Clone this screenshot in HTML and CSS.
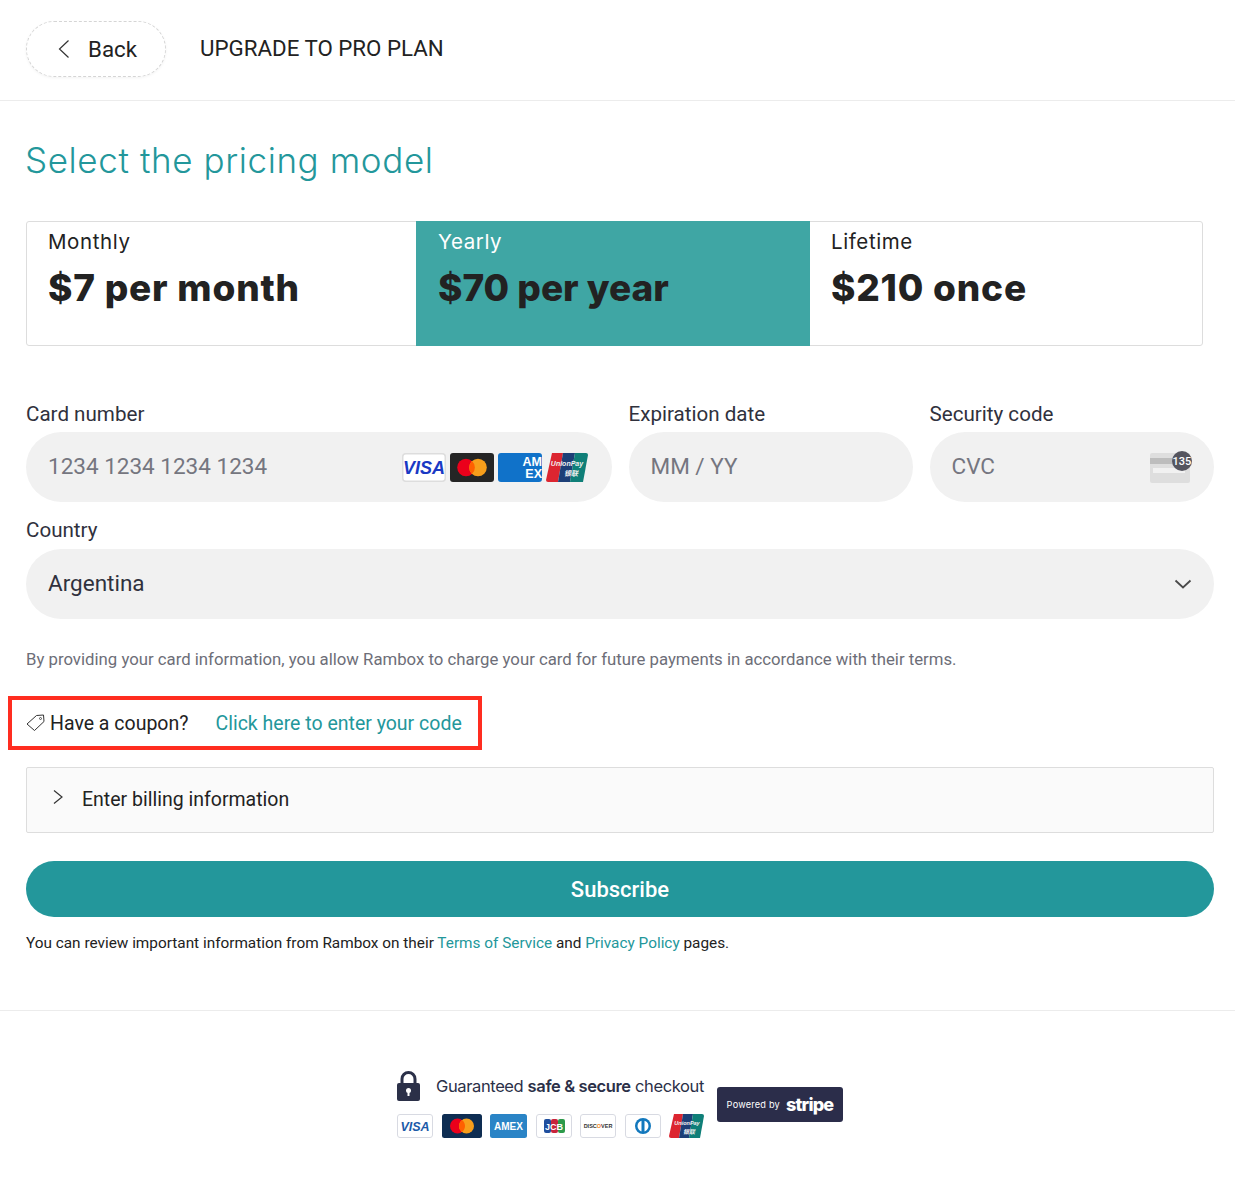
FILE: index.html
```html
<!DOCTYPE html>
<html lang="en">
<head>
  <meta charset="UTF-8">
  <meta name="viewport" content="width=device-width, initial-scale=1.0">
  <title>Upgrade to Pro Plan</title>
  <link rel="stylesheet" href="styles.css">
</head>
<body>
  <header class="topbar">
    <button class="back-button">
      <svg class="back-icon" width="14" height="20" viewBox="0 0 14 20"><path d="M11.5 1.5 2.5 10l9 8.5" fill="none" stroke="#333" stroke-width="1.2"/></svg>
      Back
    </button>
    <div class="topbar-title">UPGRADE TO PRO PLAN</div>
  </header>

  <main class="container">
    <h1>Select the pricing model</h1>

    <div class="plans">
      <div class="plan">
        <div class="plan-name">Monthly</div>
        <div class="plan-price">$7 per month</div>
      </div>
      <div class="plan active">
        <div class="plan-name">Yearly</div>
        <div class="plan-price">$70 per year</div>
      </div>
      <div class="plan">
        <div class="plan-name">Lifetime</div>
        <div class="plan-price">$210 once</div>
      </div>
    </div>

    <div class="card-grid">
      <div class="field">
        <label>Card number</label>
        <div class="input">
          <span>1234 1234 1234 1234</span>
          <div class="card-logos">
            <svg width="44" height="29" viewBox="0 0 44 29"><rect x=".75" y=".75" width="42.5" height="27.5" rx="3" fill="#fff" stroke="#ddd" stroke-width="1.5"/><text x="22" y="20.500" text-anchor="middle" class="logo-visa" font-size="18">VISA</text></svg>
            <svg width="44" height="29" viewBox="0 0 44 29"><rect width="44" height="29" rx="3" fill="#252525"/><circle cx="16" cy="14.500" r="8.800" fill="#eb001b"/><circle cx="28" cy="14.500" r="8.800" fill="#f79e1b"/><path d="M22 8a8.800 8.800 0 0 1 0 13 8.800 8.800 0 0 1 0-13z" fill="#ff5f00"/></svg>
            <svg width="44" height="29" viewBox="0 0 44 29"><rect width="44" height="29" rx="3" fill="#1072c9"/><text x="44" y="13" text-anchor="end" class="logo-amex" font-size="12.500">AM</text><text x="44" y="25" text-anchor="end" class="logo-amex" font-size="12.500">EX</text></svg>
            <svg width="42" height="29" viewBox="0 0 42 29"><path d="M6 0h11l-5 29H2q-2 0-2-2z" fill="#dc2530"/><path d="M17 0h12l-5 29H12z" fill="#1d3f77"/><path d="M29 0h11q2 0 2 2l-5 27H24z" fill="#0f7f78"/><text x="21" y="13" text-anchor="middle" class="logo-up" font-size="7">UnionPay</text><text x="25" y="23" text-anchor="middle" class="logo-up" font-size="7">银联</text></svg>
          </div>
        </div>
      </div>
      <div class="field">
        <label>Expiration date</label>
        <div class="input"><span>MM / YY</span></div>
      </div>
      <div class="field">
        <label>Security code</label>
        <div class="input cvc-input">
          <span>CVC</span>
          <svg class="cvc-icon" width="42" height="32" viewBox="0 0 42 32"><rect x="0" y="2" width="40" height="30" rx="2" fill="#dedede"/><rect x="0" y="7" width="40" height="6" fill="#bdbdbd"/><rect x="3" y="17" width="32" height="5" fill="#f1f1f1"/><circle cx="32" cy="10" r="10" fill="#55555f"/><text x="32" y="14" text-anchor="middle" class="cvc-text">135</text></svg>
        </div>
      </div>
    </div>

    <div class="field country">
      <label>Country</label>
      <div class="input">
        <span class="value">Argentina</span>
        <svg width="18" height="10" viewBox="0 0 18 10"><path d="M1.500 1.500 9 8.500l7.500-7" fill="none" stroke="#4a4a4a" stroke-width="1.800"/></svg>
      </div>
    </div>

    <p class="terms-note">By providing your card information, you allow Rambox to charge your card for future payments in accordance with their terms.</p>

    <div class="coupon">
      <svg width="19" height="18" viewBox="0 0 19 18"><path d="M1 10 10.500 1.500 17.500 1l.5 6.500L8.500 16.500z" fill="none" stroke="#333" stroke-width="1"/><circle cx="14.500" cy="4.500" r="1" fill="none" stroke="#333" stroke-width=".8"/></svg>
      <span class="coupon-text">Have a coupon?</span>
      <a class="link coupon-link">Click here to enter your code</a>
    </div>

    <div class="billing">
      <svg class="billing-icon" width="12" height="16" viewBox="0 0 12 16"><path d="M2 1.500 10 8l-8 6.500" fill="none" stroke="#333" stroke-width="1.200"/></svg>
      <span>Enter billing information</span>
    </div>

    <button class="subscribe">Subscribe</button>
    <p class="review">You can review important information from Rambox on their <a class="link">Terms of Service</a> and <a class="link">Privacy Policy</a> pages.</p>
  </main>

  <footer class="footer">
    <div class="secure">
      <div class="secure-top">
        <svg class="lock" width="23" height="30" viewBox="0 0 23 30"><path d="M5 13V8a6.500 6.500 0 0 1 13 0v5" fill="none" stroke="#2b3048" stroke-width="3"/><path d="M2 12h19q2 0 2 2v14q0 2-2 2H2q-2 0-2-2V14q0-2 2-2z" fill="#2b3048"/><circle cx="11.500" cy="19.500" r="2.500" fill="#fff"/><rect x="10.500" y="20" width="2" height="5" fill="#fff"/></svg>
        <span>Guaranteed <b>safe &amp; secure</b> checkout</span>
      </div>
      <div class="secure-cards">
        <svg width="36" height="24" viewBox="0 0 36 24"><rect x=".5" y=".5" width="35" height="23" rx="2.500" fill="#fff" stroke="#d8dae2"/><text x="18" y="16.500" text-anchor="middle" class="logo-visa2" font-size="12.500">VISA</text></svg>
        <svg width="40" height="24" viewBox="0 0 40 24"><rect width="40" height="24" rx="2.500" fill="#0e2d52"/><circle cx="15.500" cy="12" r="7.500" fill="#eb001b"/><circle cx="24.500" cy="12" r="7.500" fill="#f79e1b"/><path d="M20 6a7.500 7.500 0 0 1 0 12 7.500 7.500 0 0 1 0-12z" fill="#ff5f00"/></svg>
        <svg width="37" height="24" viewBox="0 0 37 24"><rect width="37" height="24" rx="2.500" fill="#2a84c6"/><text x="18.500" y="16" text-anchor="middle" class="logo-amex" font-size="10">AMEX</text></svg>
        <svg width="36" height="24" viewBox="0 0 36 24"><rect x=".5" y=".5" width="35" height="23" rx="2.500" fill="#fff" stroke="#d8dae2"/><rect x="8" y="5" width="7" height="14" rx="2" fill="#1f4e9e"/><rect x="15" y="5" width="7" height="14" rx="2" fill="#c8243b"/><rect x="22" y="5" width="7" height="14" rx="2" fill="#2c9a4a"/><text x="18" y="15.500" text-anchor="middle" class="logo-jcb">JCB</text></svg>
        <svg width="36" height="24" viewBox="0 0 36 24"><rect x=".5" y=".5" width="35" height="23" rx="2.500" fill="#fff" stroke="#d8dae2"/><text x="18" y="14" text-anchor="middle" class="logo-discover">DISC<tspan fill="#f58220">O</tspan>VER</text></svg>
        <svg width="36" height="24" viewBox="0 0 36 24"><rect x=".5" y=".5" width="35" height="23" rx="2.500" fill="#fff" stroke="#d8dae2"/><circle cx="18" cy="12" r="8" fill="#1278bd"/><circle cx="18" cy="12" r="5.500" fill="#fff"/><rect x="16.500" y="6" width="3" height="12" fill="#1278bd"/></svg>
        <svg width="35" height="24" viewBox="0 0 35 24"><path d="M5 0h9l-4 24H2q-2 0-2-2z" fill="#dc2530"/><path d="M14 0h10l-4 24H10z" fill="#1d3f77"/><path d="M24 0h9q2 0 2 2l-4 22H20z" fill="#0f7f78"/><text x="18" y="11" text-anchor="middle" class="logo-up" font-size="5.500">UnionPay</text><text x="20" y="20" text-anchor="middle" class="logo-up" font-size="6">银联</text></svg>
      </div>
    </div>
    <div class="stripe-badge">
      <span class="powered">Powered by</span>
      <span class="stripe-name">stripe</span>
    </div>
  </footer>
</body>
</html>
```

FILE: styles.css
```css
html, body {
  margin: 0;
  padding: 0;
}
body {
  font-family: Roboto, Arial, sans-serif;
  background: #fff;
  color: #222;
}
.topbar {
  display: flex;
  align-items: center;
  height: 100px;
  padding-left: 26px;
  border-bottom: 1px solid #ececec;
  box-sizing: content-box;
}
.back-button {
  display: flex;
  align-items: center;
  gap: 17px;
  width: 140px;
  height: 56px;
  padding: 0 0 0 30px;
  margin-top: -2px;
  border: 1px dashed #d5d5d5;
  border-radius: 28px;
  background: #fff;
  box-shadow: 0 1px 3px rgba(0, 0, 0, 0.05);
  font-family: Roboto, Arial, sans-serif;
  font-size: 22.300px;
  color: #222;
  box-sizing: border-box;
}
.topbar-title {
  margin-left: 34px;
  margin-top: -4px;
  font-size: 22.300px;
  color: #222;
}
.container {
  padding: 0 21px 0 26px;
}
h1 {
  margin: 38px 0 0 -1px;
  font-family: Inter, sans-serif;
  font-weight: 300;
  font-size: 35px;
  line-height: 42px;
  letter-spacing: 0.6px;
  color: #23979b;
}
.plans {
  display: grid;
  grid-template-columns: 389px 394px 1fr;
  width: 1177px;
  height: 125px;
  margin-top: 40px;
  border: 1px solid #ddd;
  border-radius: 3px;
  box-sizing: border-box;
}
.plan {
  padding: 7px 21px 0;
  color: #222;
}
.plan.active {
  margin: -1px 0;
  padding: 8px 22px 0;
  background: #3fa6a4;
  color: #fff;
}
.plan.active .plan-price {
  color: #222;
  letter-spacing: 0;
}
.plan-name {
  font-family: Inter, sans-serif;
  font-size: 20.500px;
  line-height: 26px;
  letter-spacing: 0.6px;
}
.plan-price {
  margin-top: 10px;
  font-family: Inter, sans-serif;
  font-weight: 800;
  font-size: 37px;
  line-height: 46px;
  letter-spacing: 0.8px;
}
.card-grid {
  display: grid;
  grid-template-columns: 586px 1fr 1fr;
  gap: 16.500px;
  margin-top: 56px;
}
label {
  display: block;
  font-size: 20.600px;
  line-height: 24px;
  color: #30313d;
  margin-bottom: 6px;
}
.input {
  display: flex;
  align-items: center;
  justify-content: space-between;
  height: 70px;
  padding: 0 24px 2px 22px;
  border-radius: 35px;
  background: #f1f1f1;
  font-size: 22.500px;
  color: #757680;
  box-sizing: border-box;
}
.input svg {
  margin-bottom: -2px;
}
.input .value {
  color: #30313d;
}
.cvc-input {
  padding-right: 22px;
}
.card-logos {
  display: flex;
  gap: 4px;
}
.logo-visa, .logo-visa2 {
  font-family: "Liberation Sans", sans-serif;
  font-weight: bold;
  font-style: italic;
  fill: #1a39c4;
}
.logo-visa2 {
  fill: #1c5aa8;
}
.logo-amex {
  font-family: "Liberation Sans", sans-serif;
  font-weight: bold;
  fill: #fff;
}
.logo-up {
  font-family: "Liberation Sans", "Noto Sans CJK SC", sans-serif;
  font-weight: bold;
  font-style: italic;
  fill: #f2f2f2;
}
.cvc-text {
  font-family: Roboto, sans-serif;
  font-size: 11px;
  font-weight: 500;
  fill: #fff;
}
.logo-jcb {
  font-family: "Liberation Sans", sans-serif;
  font-size: 9px;
  font-weight: bold;
  fill: #fff;
}
.logo-discover {
  font-family: "Liberation Sans", sans-serif;
  font-size: 5.500px;
  font-weight: bold;
  fill: #333;
}
.country {
  margin-top: 16px;
}
.country label {
  margin-bottom: 7px;
}
.country .input {
  padding-right: 22px;
}
.terms-note {
  margin: 30px 0 0;
  font-size: 16.750px;
  line-height: 20px;
  color: #6d6e78;
}
.coupon {
  display: flex;
  align-items: center;
  width: 474px;
  height: 54px;
  margin: 27px 0 0 -18px;
  padding-left: 14px;
  border: 4px solid #ff2d20;
  font-size: 19.500px;
  box-sizing: border-box;
}
.coupon-text {
  margin-left: 5px;
}
.coupon-link {
  margin-left: 27px;
}
.link {
  color: #23979b;
}
.billing {
  display: flex;
  align-items: center;
  gap: 18px;
  height: 66px;
  margin-top: 17px;
  padding: 0 0 2px 25px;
  border: 1px solid #ddd;
  border-radius: 2px;
  background: #fafafa;
  font-size: 19.500px;
  box-sizing: border-box;
}
.billing-icon {
  margin-top: -4px;
}
.subscribe {
  display: block;
  width: 100%;
  height: 56px;
  margin-top: 28px;
  border: none;
  border-radius: 28px;
  background: #23979b;
  color: #fff;
  font-family: Roboto, Arial, sans-serif;
  font-size: 22px;
  font-weight: 500;
}
.review {
  margin: 17px 0 0;
  font-size: 15.350px;
  line-height: 18px;
  color: #222;
}
.footer {
  display: flex;
  justify-content: center;
  align-items: center;
  gap: 13px;
  margin-top: 58px;
  padding: 60px 21px 0 26px;
  border-top: 1px solid #ececec;
}
.secure {
  width: 307px;
}
.secure-top {
  display: flex;
  align-items: center;
  gap: 16px;
  font-family: Inter, sans-serif;
  font-size: 16.500px;
  letter-spacing: -0.38px;
  color: #2b3048;
  white-space: nowrap;
}
.lock {
  flex-shrink: 0;
}
.secure-top b {
  font-weight: 600;
}
.secure-cards {
  display: flex;
  justify-content: space-between;
  margin-top: 13px;
}
.stripe-badge {
  display: flex;
  align-items: center;
  justify-content: center;
  gap: 6px;
  width: 126px;
  height: 35px;
  border-radius: 3px;
  background: #2b2d4a;
  color: #fff;
}
.powered {
  font-family: Inter, sans-serif;
  font-size: 9.200px;
  letter-spacing: 0.2px;
}
.stripe-name {
  font-family: Inter, sans-serif;
  font-weight: 800;
  font-size: 18px;
  letter-spacing: -0.8px;
}
```
